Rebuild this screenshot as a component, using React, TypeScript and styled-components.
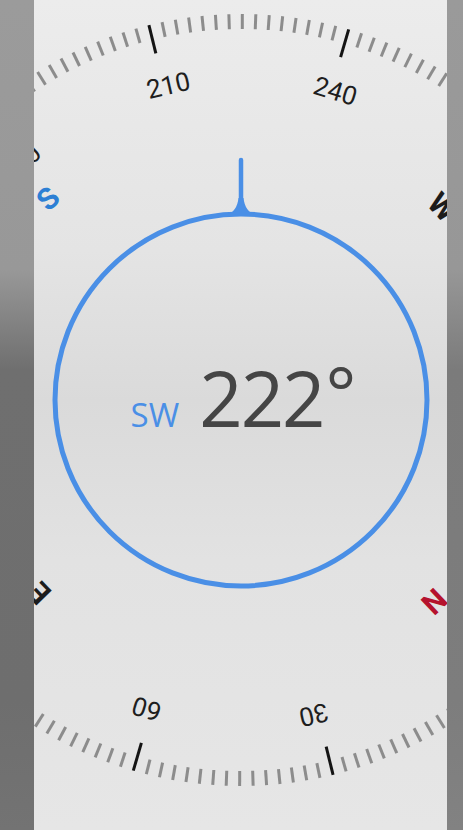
import React from 'react';
import styled, { createGlobalStyle } from 'styled-components';

const HEADING = 223.8;
const LABEL_SHIFT = 0.8;
const CX = 207;
const CY = 400;

const GlobalStyle = createGlobalStyle`
  html, body {
    margin: 0;
    padding: 0;
    background: #888;
  }
  body {
    font-family: Roboto, "Open Sans", "Liberation Sans", sans-serif;
  }
`;

const cardinals = [
  { deg: 0, text: 'N', color: '#b5122d' },
  { deg: 90, text: 'E', color: '#1c1c1c' },
  { deg: 180, text: 'S', color: '#2d7fd4' },
  { deg: 270, text: 'W', color: '#1c1c1c' },
];

const Dial = () => {
  const ticks = [];
  for (let a = 0; a < 360; a += 2) {
    const major = a % 30 === 0;
    ticks.push(
      <line
        key={a}
        x1={0}
        y1={-386}
        x2={0}
        y2={major ? -357 : -371}
        stroke={major ? '#141414' : '#8c8c8c'}
        strokeWidth={major ? 3 : 3}
        transform={`rotate(${a})`}
      />,
    );
  }

  const labels = [];
  for (let a = 0; a < 360; a += 30) {
    labels.push(
      <g key={a} transform={`rotate(${a + LABEL_SHIFT}) translate(0 -323)`}>
        <text
          textAnchor="middle"
          dominantBaseline="central"
          fontSize={26}
          fill="#1e1e1e"
          fontFamily="Roboto, sans-serif"
        >
          {a}
        </text>
      </g>,
    );
  }

  return (
    <DialSvg viewBox="0 0 413 830" width={413} height={830}>
      <g transform={`translate(${CX} ${CY}) rotate(${-HEADING})`}>
        {ticks}
        {labels}
        {cardinals.map((c) => (
          <g key={c.text} transform={`rotate(${c.deg}) translate(0 -279)`}>
            <text
              textAnchor="middle"
              dominantBaseline="central"
              fontSize={30}
              fontWeight={700}
              fill={c.color}
              fontFamily="Roboto, sans-serif"
            >
              {c.text}
            </text>
          </g>
        ))}
      </g>
      <circle cx={CX} cy={CY} r={186} fill="none" stroke="#4a8fe6" strokeWidth={5} />
      <line x1={CX} y1={160} x2={CX} y2={206} stroke="#4a8fe6" strokeWidth={4.5} strokeLinecap="round" />
      <path
        d={`M ${CX - 15} 215 Q ${CX - 4} 212 ${CX - 2.5} 198 L ${CX + 2.5} 198 Q ${CX + 4} 212 ${CX + 15} 215 Z`}
        fill="#4a8fe6"
      />
    </DialSvg>
  );
};

const App = () => (
  <>
    <GlobalStyle />
    <Screen>
      <Strip side="left" />
      <Panel>
        <Dial />
        <Readout>
          <Direction>SW</Direction>
          <Degrees>
            222
            <DegreeSign>°</DegreeSign>
          </Degrees>
        </Readout>
      </Panel>
      <Strip side="right" />
    </Screen>
  </>
);

const Screen = styled.div`
  display: flex;
  width: 463px;
  height: 830px;
  overflow: hidden;
`;

const Strip = styled.div<{ side: 'left' | 'right' }>`
  flex: 0 0 ${(p) => (p.side === 'left' ? '34px' : '16px')};
  background: ${(p) => (p.side === 'left'
    ? 'linear-gradient(to bottom, #9b9b9b 0px, #989898 270px, #6f6f6f 370px, #6e6e6e 700px, #737373 830px)'
    : 'linear-gradient(to bottom, #9a9a9a 0px, #979797 270px, #7b7b7b 370px, #7d7d7d 700px, #828282 830px)')};
`;

const Panel = styled.div`
  position: relative;
  flex: 0 0 413px;
  height: 830px;
  overflow: hidden;
  display: flex;
  align-items: center;
  justify-content: center;
  padding-bottom: 40px;
  box-sizing: border-box;
  background: linear-gradient(to bottom, #ececec 0px, #e4e4e4 250px, #dadada 400px, #e2e2e2 560px, #e6e6e6 830px);
`;

const DialSvg = styled.svg`
  position: absolute;
  left: 0;
  top: 0;
`;

const Readout = styled.div`
  position: relative;
  display: flex;
  align-items: baseline;
  gap: 20px;
  margin-left: 4px;
`;

const Direction = styled.span`
  font-size: 33px;
  color: #4a8fe6;
  font-family: "Open Sans", Roboto, sans-serif;
`;

const Degrees = styled.span`
  font-size: 76px;
  color: #454545;
  font-family: "Open Sans", Roboto, sans-serif;
  letter-spacing: -2px;
`;

const DegreeSign = styled.span`
  font-size: 72px;
  vertical-align: 8px;
  margin-left: 2px;
`;

export default App;
